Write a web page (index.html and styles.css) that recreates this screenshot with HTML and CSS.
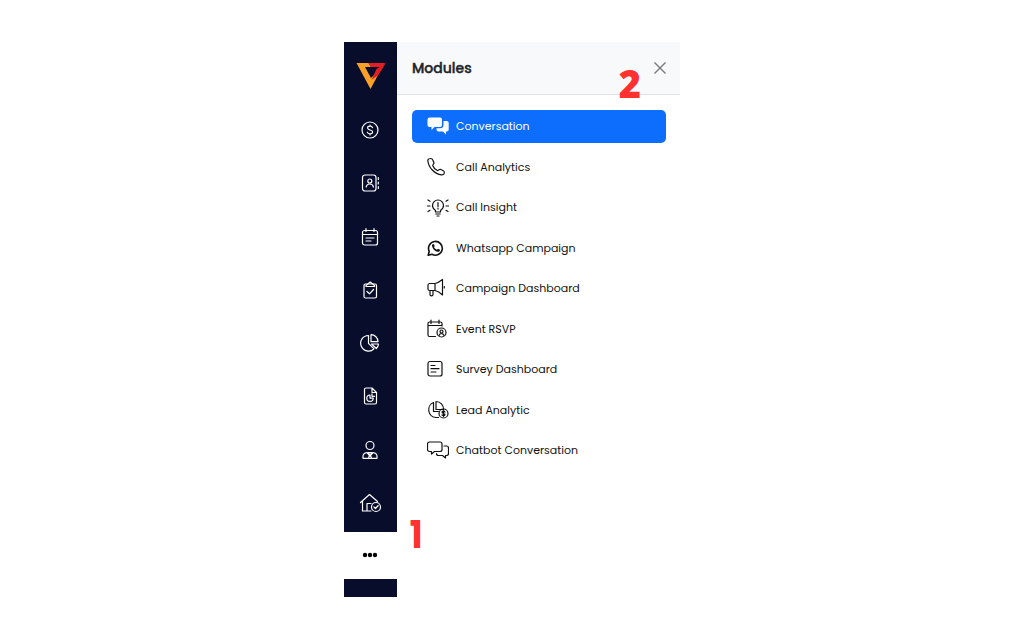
FILE: index.html
```
<!DOCTYPE html>
<html lang="en">
<head>
<meta charset="UTF-8" />
<meta name="viewport" content="width=device-width, initial-scale=1" />
<title>Modules</title>
<link rel="stylesheet" href="styles.css">
</head>
<body>
<div class="app">
    <aside class="sidebar">
        <a href="#" class="logo" aria-label="Home">
            <svg width="30" height="28" viewBox="0 0 30 28">
                <path d="M.5 1h12l2.500 4H9l6 11 4-4 3 1-7.500 14z" fill="#f9a127"/>
                <path d="M12.500 1H29.500l-5 4H15zM29.500 1.500l-7.500 12-6.500 4.500 5-11z" fill="#e31e24"/>
            </svg>
        </a>
        <nav class="side-nav">
            <a href="#" aria-label="Deals">
                <svg class="icon" viewBox="0 0 24 24"><circle cx="12" cy="12" r="8"/><path d="M14.500 9.700c-.3-1-1.300-1.500-2.500-1.500-1.400 0-2.400.7-2.400 1.800 0 2.700 5 1.300 5 4 0 1.100-1 1.800-2.600 1.800-1.400 0-2.400-.6-2.700-1.600M12 7v1M12 16v1"/></svg>
            </a>
            <a href="#" aria-label="Contacts">
                <svg class="icon" viewBox="0 0 24 24"><rect x="4.500" y="4" width="13.500" height="16" rx="2.500"/><circle cx="11.800" cy="10" r="2"/><path d="M8.200 16c.3-2 1.600-3 3.600-3s3.300 1 3.600 3M20.300 6.500v2M20.300 11v2M20.300 15.500v2"/></svg>
            </a>
            <a href="#" aria-label="Calendar">
                <svg class="icon" viewBox="0 0 24 24"><rect x="4.500" y="5.500" width="15" height="14.500" rx="2"/><path d="M4.500 9.500h15M8 3.500v3M16 3.500v3M8 13h8M8 16h5"/></svg>
            </a>
            <a href="#" aria-label="Tasks">
                <svg class="icon" viewBox="0 0 24 24"><rect x="6" y="6" width="12.500" height="14" rx="1.500"/><path d="M8 8.500v-1l4.200-3.500 4.300 3.500v1zM9 13.500l2.500 2.300 4-4.300"/></svg>
            </a>
            <a href="#" aria-label="Analytics">
                <svg class="icon" viewBox="0 0 24 24"><path d="M10.500 4.500a7.800 7.800 0 1 0 5.500 13.300l-5.500-5.500zM13 3.700v7h7a7 7 0 0 0-7-7zM13.500 13h7a7 7 0 0 1-2.200 4.500z"/></svg>
            </a>
            <a href="#" aria-label="Reports">
                <svg class="icon" viewBox="0 0 24 24"><path d="M8 4h6l4.500 4.500V18.500a1.500 1.500 0 0 1-1.500 1.500H8a1.500 1.500 0 0 1-1.500-1.500v-13A1.500 1.500 0 0 1 8 4zM14 4v4.500h4.500M12 11a3.200 3.200 0 1 0 3.200 3.200H12zM14 9.800v2.500h2.500"/></svg>
            </a>
            <a href="#" aria-label="Agents">
                <svg class="icon" viewBox="0 0 24 24"><circle cx="12" cy="7.500" r="4"/><path d="M5 20.300v-2c0-2 1.500-3.300 4-3.800l3 3.500 3-3.500c2.500.5 4 1.800 4 3.800v2zM10.500 14.500h3l-1 2.500 1 3.300h-3l1-3.300z"/></svg>
            </a>
            <a href="#" aria-label="Properties">
                <svg class="icon" viewBox="0 0 24 24"><path d="M2.500 11.500l9-8 8 7M4.500 10v10h8.500M9 20v-7.500h4"/><circle cx="18" cy="16" r="4.500"/><path d="M16 16l1.500 1.500 2.700-3"/></svg>
            </a>
        </nav>
        <button class="more-btn" aria-label="More modules">
            <svg width="16" height="6" viewBox="0 0 16 6"><circle cx="3" cy="3" r="2.200"/><circle cx="8" cy="3" r="2.200"/><circle cx="13" cy="3" r="2.200"/></svg>
            <span class="marker marker-one">1</span>
        </button>
    </aside>

    <main class="panel">
        <header class="panel-header">
            <h1>Modules</h1>
            <button class="close-btn" aria-label="Close">
                <svg width="12" height="12" viewBox="0 0 12 12"><path d="M.5.5l11 11M11.500.5l-11 11"/></svg>
            </button>
            <span class="marker marker-two">2</span>
        </header>
        <nav class="module-list">
            <a href="#" class="module active">
                <svg class="icon" viewBox="0 0 22 22"><path class="solid" d="M2.500 2.500h10.500a2 2 0 0 1 2 2v5.500a2 2 0 0 1-2 2H7.500L4.500 15v-3h-2a2 2 0 0 1-2-2V4.500a2 2 0 0 1 2-2zM16.500 6h3.200a2 2 0 0 1 2 2v6.500a2 2 0 0 1-2 2h-.7v3L16 16.500h-4.500a2 2 0 0 1-2-2v-1.200H13a3.500 3.500 0 0 0 3.500-3.500z"/></svg>
                Conversation
            </a>
            <a href="#" class="module">
                <svg class="icon" viewBox="0 0 22 22"><path d="M.8 4.500C.8 3 2.500 2.500 4 2.500c1 0 1.500.8 2 2l1 2.300c.4 1-1.500 2-1.300 2.700.6 1.800 2.700 4 4.600 5 .8.400 2-1.600 3-1.200l3 1.500c1 .5 1.200 1.200 1 2.200-.2 1.400-1.300 2-2.800 1.800C7.500 18 1.500 11.500.8 4.500z"/></svg>
                Call Analytics
            </a>
            <a href="#" class="module">
                <svg class="icon" viewBox="0 0 22 22"><path d="M8.500 16v-1.500c-2-1.300-3-3-3-5a5.500 5.500 0 0 1 11 0c0 2-1 3.700-3 5V16zM8.800 18h4.400M10 20h2M11 6.500v4M11 12v1M.5 10h2.500M19 10h2.500M1 4l2 1.200M21 4l-2 1.200M1 15.500l2-1.200M21 15.500l-2-1.200"/></svg>
                Call Insight
            </a>
            <a href="#" class="module">
                <svg class="icon" viewBox="0 0 22 22"><path class="thick" d="M1.200 18.300l1-4A6.900 6.900 0 1 1 5 17.300z"/><path class="dark" d="M5 8c.8-1.500 1.800-1.300 2.200-.2l.5 1.300-.7 1.200c.8 1.300 1.700 2 3 2.500l1-1.100 2 1c.3 1.300-1 2.200-2.300 2.100C7.500 14.500 4.800 10.500 5 8z"/></svg>
                Whatsapp Campaign
            </a>
            <a href="#" class="module">
                <svg class="icon" viewBox="0 0 22 22"><path d="M8 6.500H2.500A1.700 1.700 0 0 0 1 8.200V12a1.500 1.500 0 0 0 1.500 1.500H8zM8 6.500c2.500-.5 5-2 7.500-4v15.500c-2.500-2.500-5-4-7.500-4.500M3 13.500v4c0 1.800 3 1.800 3 0v-4M17.300 9.500v1.500"/></svg>
                Campaign Dashboard
            </a>
            <a href="#" class="module">
                <svg class="icon" viewBox="0 0 22 22"><path d="M8.500 18.500h-6A1.500 1.500 0 0 1 1 17V5.500A1.500 1.500 0 0 1 2.500 4h11A1.500 1.500 0 0 1 15 5.500V8M1 7.500h14M4 2v3.500M12 2v3.500"/><circle cx="14.500" cy="14.500" r="4.500"/><circle cx="14.500" cy="13.500" r="1.500"/><path d="M12 17.500c.5-1.500 1.300-2 2.500-2s2 .5 2.500 2"/></svg>
                Event RSVP
            </a>
            <a href="#" class="module">
                <svg class="icon" viewBox="0 0 22 22"><rect x="1" y="3.500" width="14" height="14.500" rx="2"/><path d="M4 7.500h4M4 10.700h8M4 14h5"/></svg>
                Survey Dashboard
            </a>
            <a href="#" class="module">
                <svg class="icon" viewBox="0 0 22 22"><path d="M6.500 3.500A7.800 7.800 0 0 0 9 18.500h2.500M6.500 3.500v9h5M9 2.500v8h7.500a7.500 7.500 0 0 0-7.500-8z"/><circle cx="16.500" cy="14.500" r="4.500"/><path d="M18 13c-.8-1.200-3-1-3 .3 0 1.600 3 .8 3 2.300 0 1.300-2.300 1.400-3 .3M16.500 11.500v6"/></svg>
                Lead Analytic
            </a>
            <a href="#" class="module">
                <svg class="icon" viewBox="0 0 22 22"><path d="M2.500 3h10.500a2 2 0 0 1 2 2v5.500a2 2 0 0 1-2 2H7.500L4.500 15v-2.500h-2a2 2 0 0 1-2-2V5a2 2 0 0 1 2-2zM17 7h2.500a2 2 0 0 1 2 2v5.500a2 2 0 0 1-2 2H18.500V19L15.500 16.500h-4a2 2 0 0 1-2-2"/></svg>
                Chatbot Conversation
            </a>
        </nav>
    </main>
</div>
</body>
</html>
```
FILE: styles.css
```
* {
    box-sizing: border-box;
}

body {
    margin: 0;
    min-height: 100vh;
    padding-bottom: 2px;
    font-family: Poppins, Inter, "Open Sans", sans-serif;
    background: #fff;
    color: #212529;
    display: flex;
    justify-content: center;
    align-items: center;
}

.app {
    display: flex;
    width: 100%;
    max-width: 336px;
}

/* Dark icon rail */
.sidebar {
    flex: 0 0 53px;
    display: flex;
    flex-direction: column;
    padding-bottom: 18px;
    background: #080d2b;
}

.logo {
    display: flex;
    justify-content: center;
    align-items: center;
    height: 62px;
    padding-top: 6px;
}

.side-nav {
    display: grid;
    grid-auto-rows: 1fr;
    min-height: 428px;
    padding-right: 1px;
    padding-bottom: 2px;
    color: #fff;
}

.side-nav a {
    display: flex;
    justify-content: center;
    align-items: center;
    color: inherit;
}

.icon {
    flex: none;
    fill: none;
    stroke: currentColor;
    stroke-width: 1.2;
    stroke-linecap: round;
    stroke-linejoin: round;
}

.side-nav .icon {
    width: 24px;
    height: 24px;
}

.icon .thick {
    stroke-width: 1.6;
}

.icon .solid,
.icon .dark {
    fill: currentColor;
    stroke: none;
}

.more-btn {
    position: relative;
    display: flex;
    justify-content: center;
    align-items: center;
    height: 47px;
    padding: 0 1px 0 0;
    border: none;
    background: #fff;
    color: #000;
    font-family: inherit;
    cursor: pointer;
}

/* Modules panel */
.panel {
    flex: 1;
    min-width: 0;
}

.panel-header {
    position: relative;
    display: flex;
    justify-content: space-between;
    align-items: center;
    height: 53px;
    padding: 0 14px 0 15px;
    background: #f8f9fb;
    border-bottom: 1px solid #dee2e6;
}

.panel-header h1 {
    margin: 0;
    font-size: 14px;
    line-height: 20px;
    font-weight: 500;
    -webkit-text-stroke: 0.4px currentColor;
}

.close-btn {
    display: flex;
    padding: 0;
    border: none;
    background: none;
    cursor: pointer;
}

.close-btn svg {
    stroke: #777;
    stroke-width: 1.4;
}

.module-list {
    display: flex;
    flex-direction: column;
    justify-content: space-between;
    min-height: 387px;
    padding: 15px 14px 15px 15px;
}

.module {
    display: flex;
    align-items: center;
    gap: 7px;
    height: 33px;
    padding: 0 15px;
    border-radius: 5px;
    color: #111;
    font-size: 11px;
    line-height: 18px;
    text-decoration: none;
}

.module .icon {
    width: 22px;
    height: 22px;
}

.module.active {
    background: #0d6efd;
    color: #fff;
}

/* Step markers over the controls */
.marker {
    position: absolute;
    color: #ff3131;
    font-size: 38px;
    line-height: 38px;
}

.marker-one {
    left: 66px;
    bottom: 25px;
    font-size: 36px;
    font-weight: 500;
    -webkit-text-stroke: 2px currentColor;
}

.marker-two {
    right: 39px;
    bottom: -8px;
    font-family: "Open Sans", sans-serif;
    font-weight: 800;
}
```
